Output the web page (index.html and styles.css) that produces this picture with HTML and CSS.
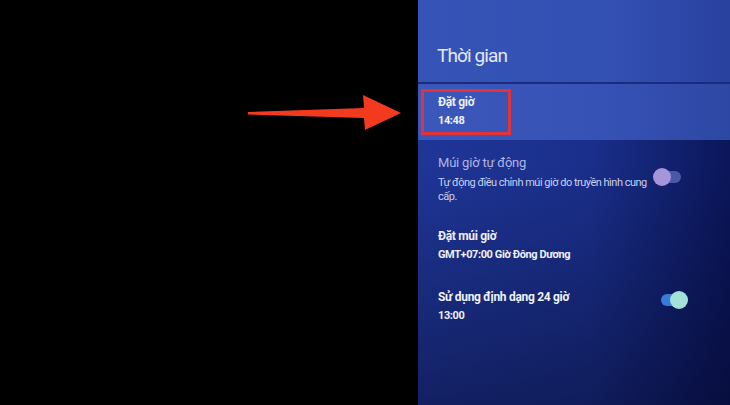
FILE: index.html
```html
<!DOCTYPE html>
<html lang="vi">
<head>
  <meta charset="UTF-8" />
  <meta name="viewport" content="width=device-width, initial-scale=1.0" />
  <title>Thời gian</title>
  <link rel="stylesheet" href="styles.css">
</head>
<body>
  <div class="screen">
    <div class="backdrop">
      <!-- pointer to the selected entry -->
      <svg class="pointer" width="160" height="40" viewBox="0 0 160 40">
        <path d="M0 17 L116 13 L115 0 L153 18 L117 35 L116 23 L0 19.5 Z" fill="#f23a1f"/>
      </svg>
    </div>

    <div class="panel">
      <div class="panel-header">
        <h1>Thời gian</h1>
      </div>

      <div class="item selected">
        <div class="callout">
          <div class="item-title">Đặt giờ</div>
          <div class="item-sub">14:48</div>
        </div>
      </div>

      <div class="item disabled">
        <div class="item-text">
          <div class="item-title">Múi giờ tự động</div>
          <div class="item-desc">Tự động điều chỉnh múi giờ do truyền hình cung cấp.</div>
        </div>
        <div class="switch"><span class="knob"></span></div>
      </div>

      <div class="item zone">
        <div class="item-text">
          <div class="item-title">Đặt múi giờ</div>
          <div class="item-sub">GMT+07:00 Giờ Đông Dương</div>
        </div>
      </div>

      <div class="item format">
        <div class="item-text">
          <div class="item-title">Sử dụng định dạng 24 giờ</div>
          <div class="item-sub">13:00</div>
        </div>
        <div class="switch on"><span class="knob"></span></div>
      </div>
    </div>
  </div>
</body>
</html>
```

FILE: styles.css
```css
/* Android TV style settings side panel */
body {
  margin: 0;
  background: #000;
  font-family: Roboto, 'Noto Sans', sans-serif;
  color: #eef1fb;
}
.screen {
  width: 730px;
  height: 405px;
  display: flex;
  overflow: hidden;
}
/* Black area left of the panel */
.backdrop {
  width: 418px;
  position: relative;
}
.pointer {
  position: absolute;
  left: 248px;
  top: 95px;
}
/* Settings panel */
.panel {
  flex: 1;
  display: flex;
  flex-direction: column;
  background:
    linear-gradient(to bottom, rgba(0, 0, 20, 0) 40%, rgba(0, 0, 20, 0.4)),
    linear-gradient(to right, #1f3698, #1a2f8b 55%, #0b165a);
}
.panel-header {
  height: 82px;
  padding-left: 19px;
  display: flex;
  align-items: flex-end;
  background: linear-gradient(to right, #3654b7, #3350b3 60%, #2942a0);
  border-bottom: 2px solid #1b2c7c;
}
.panel-header h1 {
  margin: 0 0 15px;
  font-size: 19px;
  font-weight: 400;
  letter-spacing: -0.9px;
  color: #e3e8f7;
}
/* List rows */
.item {
  display: flex;
  align-items: center;
  padding: 0 42px 0 20px;
}
.item-title {
  font-size: 12px;
  font-weight: 700;
  line-height: 16px;
  letter-spacing: -0.3px;
}
.item-sub {
  font-size: 11px;
  font-weight: 700;
  line-height: 21px;
  letter-spacing: -0.4px;
}
.item-desc {
  font-size: 11px;
  line-height: 14px;
  letter-spacing: -0.5px;
  color: #c9d0f0;
  margin-top: 5px;
}
.item-text {
  flex: 1;
}
.selected {
  height: 56px;
  padding-left: 3px;
  background: linear-gradient(to right, #3b57b9, #3652b5 60%, #2d47a4);
}
.callout {
  box-sizing: border-box;
  border: 3px solid #e2323a;
  width: 90px;
  height: 46px;
  padding: 1px 0 0 14px;
  display: flex;
  flex-direction: column;
  justify-content: center;
}
.disabled {
  margin-top: 15px;
}
.disabled .item-title {
  font-weight: 400;
  font-size: 13px;
  letter-spacing: -0.2px;
  color: #aeb6e3;
}
.zone {
  margin-top: 24px;
}
.format {
  margin-top: 24px;
}
/* Toggle switches */
.switch {
  width: 35px;
  height: 18px;
  margin-left: 5px;
  position: relative;
  display: flex;
  align-items: center;
}
.switch::before {
  content: "";
  display: block;
  margin-left: 8px;
  width: 20px;
  height: 12px;
  border-radius: 6px;
  background: #4c58a6;
}
.knob {
  position: absolute;
  left: 0;
  top: 0;
  width: 18px;
  height: 18px;
  border-radius: 50%;
  background: #a596d9;
}
.disabled .switch {
  margin-top: -6px;
}
.switch.on::before {
  background: #3b7ad9;
}
.switch.on .knob {
  left: auto;
  right: 0;
  background: #a3e2d9;
}
.format .switch {
  margin-top: -16px;
}
```
